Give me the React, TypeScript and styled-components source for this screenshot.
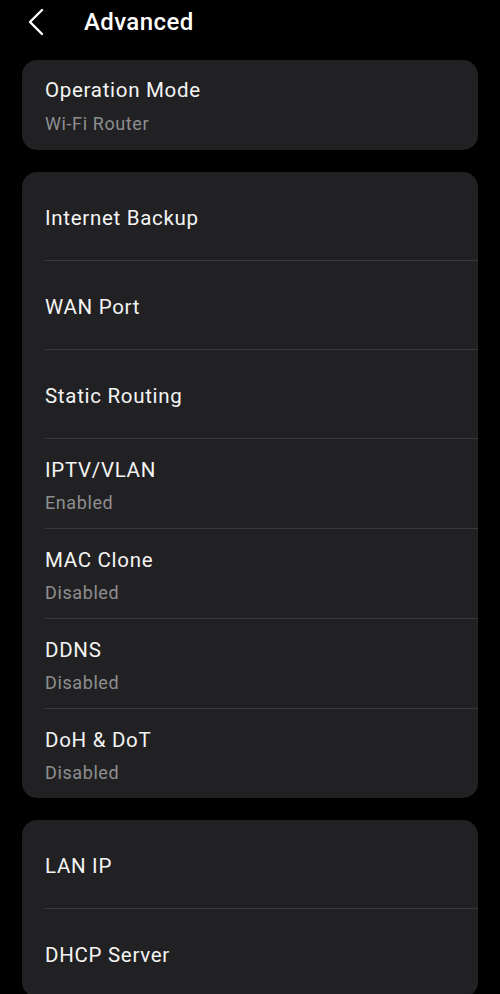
import React from 'react';
import styled, { createGlobalStyle } from 'styled-components';

const GlobalStyle = createGlobalStyle`
    html, body {
        margin: 0;
        padding: 0;
        background: #000000;
        overflow: hidden;
    }
    body {
        font-family: Roboto, "Noto Sans", sans-serif;
        -webkit-font-smoothing: antialiased;
    }
`;

interface SettingItem {
    title: string;
    value?: string;
}

const sections: SettingItem[][] = [
    [{ title: 'Operation Mode', value: 'Wi-Fi Router' }],
    [
        { title: 'Internet Backup' },
        { title: 'WAN Port' },
        { title: 'Static Routing' },
        { title: 'IPTV/VLAN', value: 'Enabled' },
        { title: 'MAC Clone', value: 'Disabled' },
        { title: 'DDNS', value: 'Disabled' },
        { title: 'DoH & DoT', value: 'Disabled' },
    ],
    [{ title: 'LAN IP' }, { title: 'DHCP Server' }],
];

const Page = styled.div`
    width: 500px;
    min-height: 994px;
    background: #000000;
    color: #f4f4f4;
`;

const Header = styled.header`
    height: 60px;
    display: flex;
    align-items: flex-start;
`;

const BackButton = styled.button`
    width: 84px;
    height: 44px;
    padding: 0 0 0 26px;
    border: none;
    background: transparent;
    display: flex;
    align-items: center;
`;

const HeaderTitle = styled.h1`
    margin: 0;
    font-size: 24px;
    font-weight: 500;
    line-height: 44px;
    letter-spacing: 0.4px;
    color: #ffffff;
`;

const List = styled.main`
    display: flex;
    flex-direction: column;
    gap: 22px;
    padding: 0 22px;
`;

const Card = styled.section`
    background: #212123;
    border-radius: 15px;
    padding-left: 23px;
    overflow: hidden;
`;

const Row = styled.div<{ $twoLine: boolean; $lead: boolean }>`
    display: flex;
    flex-direction: column;
    border-top: ${(p) => (p.$lead ? 'none' : '1px solid #39393b')};
    padding: ${(p) => (p.$twoLine ? (p.$lead ? '16px 0 14px' : '17px 0 13px') : '32px 0 28px')};
`;

const Title = styled.span`
    font-size: 20.5px;
    line-height: 28px;
    letter-spacing: 0.7px;
    color: #f4f4f4;
`;

const Value = styled.span<{ $lead: boolean }>`
    margin-top: ${(p) => (p.$lead ? '8px' : '7px')};
    font-size: 18px;
    line-height: 24px;
    letter-spacing: 0.6px;
    color: #8e8e90;
`;

const ChevronLeft = () => (
    <svg width="20" height="28" viewBox="0 0 20 28" fill="none">
        <path d="M16 2 L4 14 L16 26" stroke="#ffffff" strokeWidth="2.4" strokeLinecap="round" strokeLinejoin="round" />
    </svg>
);

const App: React.FC = () => {
    return (
        <Page>
            <GlobalStyle />
            <Header>
                <BackButton aria-label="Back">
                    <ChevronLeft />
                </BackButton>
                <HeaderTitle>Advanced</HeaderTitle>
            </Header>
            <List>
                {sections.map((items, si) => (
                    <Card key={si}>
                        {items.map((item, i) => (
                            <Row key={item.title} $twoLine={!!item.value} $lead={i === 0}>
                                <Title>{item.title}</Title>
                                {item.value && <Value $lead={i === 0}>{item.value}</Value>}
                            </Row>
                        ))}
                    </Card>
                ))}
            </List>
        </Page>
    );
};

export default App;
